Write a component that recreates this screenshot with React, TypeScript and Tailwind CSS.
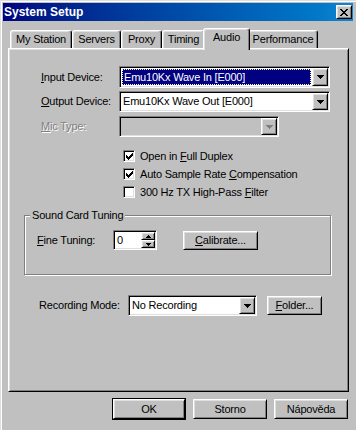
import React from 'react';

const raised =
  'border border-t-white border-l-white border-r-black border-b-black shadow-[inset_1px_1px_#dfdfdf,inset_-1px_-1px_#808080]';
const sunken =
  'border border-t-[#808080] border-l-[#808080] border-r-white border-b-white shadow-[inset_1px_1px_#000,inset_-1px_-1px_#dfdfdf]';

const U: React.FC<{ children: React.ReactNode }> = ({ children }) => (
  <span className="underline decoration-1 underline-offset-[1px]">{children}</span>
);

const DownArrow = ({ color = '#000' }: { color?: string }) => (
  <svg width="7" height="4" viewBox="0 0 7 4" shapeRendering="crispEdges">
    <rect x="0" y="0" width="7" height="1" fill={color} />
    <rect x="1" y="1" width="5" height="1" fill={color} />
    <rect x="2" y="2" width="3" height="1" fill={color} />
    <rect x="3" y="3" width="1" height="1" fill={color} />
  </svg>
);

const SmallArrow = ({ up }: { up?: boolean }) => (
  <svg width="5" height="3" viewBox="0 0 5 3" shapeRendering="crispEdges">
    <rect x="0" y={up ? 2 : 0} width="5" height="1" fill="#000" />
    <rect x="1" y="1" width="3" height="1" fill="#000" />
    <rect x="2" y={up ? 0 : 2} width="1" height="1" fill="#000" />
  </svg>
);

interface ComboProps {
  text?: string;
  className: string;
  selected?: boolean;
  disabled?: boolean;
}

const Combo: React.FC<ComboProps> = ({ text, className, selected, disabled }) => (
  <div className={`flex p-[1px] ${sunken} ${disabled ? 'bg-[#c0c0c0]' : 'bg-white'} ${className}`}>
    <div className="flex-1 min-w-0 flex p-[1px]">
      <div
        className={`flex-1 flex items-center pl-[1px] whitespace-nowrap overflow-hidden ${
          selected ? 'bg-[#000080] text-white border border-dotted border-[#fff8e0]' : ''
        }`}
      >
        {text}
      </div>
    </div>
    <div className={`w-[16px] flex items-center justify-center bg-[#c0c0c0] ${raised}`}>
      <DownArrow color={disabled ? '#808080' : '#000'} />
    </div>
  </div>
);

const CheckBox: React.FC<{ checked?: boolean; children: React.ReactNode }> = ({ checked, children }) => (
  <div className="h-[18px] flex items-center">
    <div className={`w-[12px] h-[12px] bg-white flex items-center justify-center ${sunken}`}>
      {checked && (
        <svg width="7" height="7" viewBox="0 0 7 7" shapeRendering="crispEdges">
          <path d="M0 2h1v1h1v1h1v-1h1v-1h1v-1h1v-1h1v3h-1v1h-1v1h-1v1h-1v1h-1v-1h-1v-1h-1z" fill="#000" />
        </svg>
      )}
    </div>
    <span className="ml-[5px]">{children}</span>
  </div>
);

const Button: React.FC<{ className: string; children: React.ReactNode }> = ({ className, children }) => (
  <div className={`flex items-center justify-center bg-[#c0c0c0] ${raised} ${className}`}>{children}</div>
);

interface TabProps {
  label: string;
  className: string;
  active?: boolean;
}

const Tab: React.FC<TabProps> = ({ label, className, active }) => (
  <div
    className={`relative flex justify-center bg-[#c0c0c0] border-l border-t border-r border-l-white border-t-white border-r-black rounded-t-[3px] shadow-[inset_-1px_0_#808080,inset_1px_1px_#dfdfdf] ${
      active ? 'h-[22px] -mx-[2px] -mb-[2px] z-10 pt-[3px]' : 'h-[18px] items-center'
    } ${className}`}
  >
    {label}
  </div>
);

export default function App() {
  return (
    <div className="w-[356px] h-[430px] bg-[#c0c0c0] text-black font-['Liberation_Sans',Arial,sans-serif] text-[11px] tracking-[-0.2px] leading-none border-l border-t border-[#dfdfdf] shadow-[inset_1px_1px_#fff] pt-[2px] pl-[2px] pr-[3px] flex flex-col overflow-hidden">
      {/* title bar */}
      <div className="h-[18px] bg-linear-to-r from-[#000080] to-[#1084d0] flex items-center justify-between pl-[1px] pr-[1px]">
        <span className="text-white font-bold text-[12px] tracking-normal">System Setup</span>
        <div className={`w-[16px] h-[14px] bg-[#c0c0c0] flex items-center justify-center ${raised}`}>
          <svg width="8" height="7" viewBox="0 0 8 7" shapeRendering="crispEdges">
            <path d="M0 0h2v1h1v1h2v-1h1v-1h2v1h-1v1h-1v1h-1v1h1v1h1v1h1v1h-2v-1h-1v-1h-2v1h-1v1h-2v-1h1v-1h1v-1h1v-1h-1v-1h-1v-1h-1z" fill="#000" />
          </svg>
        </div>
      </div>

      {/* tabs */}
      <div className="mt-[7px] h-[20px] pl-[7px] flex items-end">
        <Tab label="My Station" className="w-[62px]" />
        <Tab label="Servers" className="w-[49px]" />
        <Tab label="Proxy" className="w-[41px]" />
        <Tab label="Timing" className="w-[43px]" />
        <Tab label="Audio" className="w-[47px]" active />
        <Tab label="Performance" className="w-[70px]" />
      </div>

      {/* page */}
      <div className={`ml-[5px] w-[341px] h-[344px] p-[1px] flex flex-col ${raised}`}>
        <div className="mt-[16px] h-[22px] flex items-center pl-[31px]">
          <span className="w-[78px]">
            <U>I</U>nput Device:
          </span>
          <Combo text="Emu10Kx Wave In [E000]" className="w-[211px] h-[22px]" selected />
        </div>
        <div className="mt-[3px] h-[21px] flex items-center pl-[31px]">
          <span className="w-[78px]">
            <U>O</U>utput Device:
          </span>
          <Combo text="Emu10Kx Wave Out [E000]" className="w-[211px] h-[21px]" />
        </div>
        <div className="mt-[4px] h-[21px] flex items-center pl-[31px]">
          <span className="w-[78px] text-[#808080] [text-shadow:1px_1px_0_#fff]">
            <U>M</U>ic Type:
          </span>
          <Combo className="w-[160px] h-[21px]" disabled />
        </div>

        <div className="mt-[10px] pl-[113px] flex flex-col">
          <CheckBox checked>
            Open in <U>F</U>ull Duplex
          </CheckBox>
          <CheckBox checked>
            Auto Sample Rate <U>C</U>ompensation
          </CheckBox>
          <CheckBox>
            300 Hz TX High-Pass <U>F</U>ilter
          </CheckBox>
        </div>

        <fieldset className="mt-[7px] ml-[14px] w-[307px] border border-[#808080] shadow-[inset_1px_1px_#fff,1px_1px_#fff] pb-[24px]">
          <legend className="ml-[5px] px-[2px] leading-[14px] bg-[#c0c0c0]">Sound Card Tuning</legend>
          <div className="mt-[8px] h-[20px] flex items-center pl-[12px]">
            <span className="w-[76px]">
              <U>F</U>ine Tuning:
            </span>
            <div className={`w-[44px] h-[20px] flex bg-white p-[1px] ${sunken}`}>
              <div className="flex-1 flex items-center pl-[2px]">0</div>
              <div className="w-[14px] flex flex-col">
                <div className={`flex-1 flex items-center justify-center bg-[#c0c0c0] ${raised}`}>
                  <SmallArrow up />
                </div>
                <div className={`flex-1 flex items-center justify-center bg-[#c0c0c0] ${raised}`}>
                  <SmallArrow />
                </div>
              </div>
            </div>
            <Button className="ml-[26px] w-[75px] h-[19px]">
              <span>
                <U>C</U>alibrate...
              </span>
            </Button>
          </div>
        </fieldset>

        <div className="mt-[20px] h-[21px] flex items-center pl-[29px]">
          <span className="w-[89px]">Recording Mode:</span>
          <Combo text="No Recording" className="w-[129px] h-[21px]" />
          <Button className="ml-[10px] w-[55px] h-[19px]">
            <span>
              <U>F</U>older...
            </span>
          </Button>
        </div>
      </div>

      {/* dialog buttons */}
      <div className="mt-[6px] h-[22px] flex items-center justify-end gap-[7px] pr-[5px]">
        <div className="w-[74px] h-[22px] border border-black flex">
          <Button className="flex-1">OK</Button>
        </div>
        <Button className="w-[74px] h-[20px]">Storno</Button>
        <Button className="w-[74px] h-[20px]">Nápověda</Button>
      </div>
    </div>
  );
}
